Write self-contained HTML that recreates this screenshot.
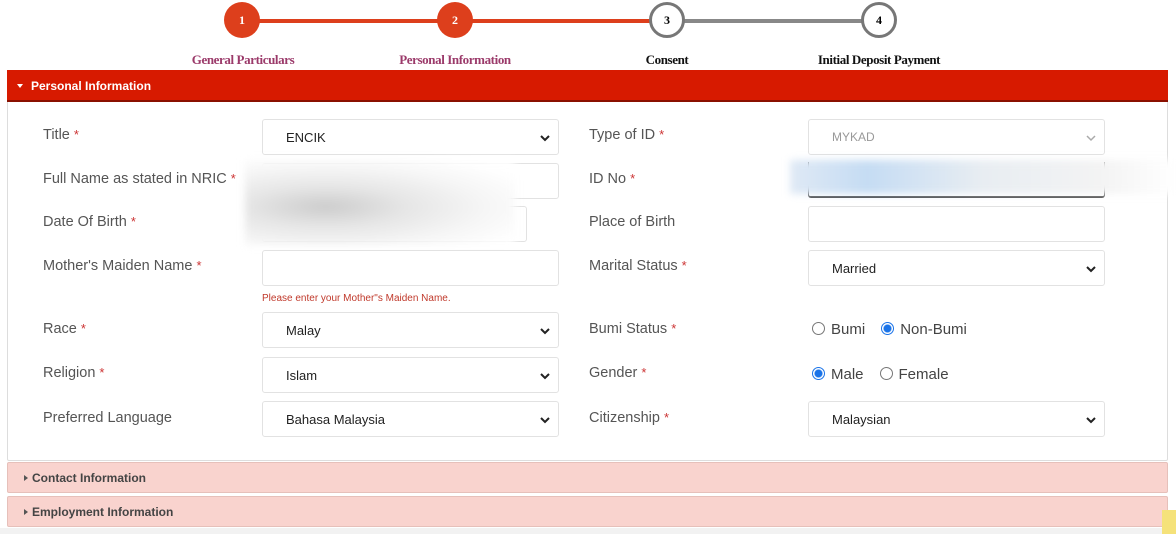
<!DOCTYPE html>
<html><head><meta charset="utf-8"><style>
*{box-sizing:border-box;margin:0;padding:0}
body{width:1176px;height:534px;background:#fff;position:relative;overflow:hidden;font-family:"Liberation Sans",sans-serif;}
.a{position:absolute}
.c{position:absolute;width:36px;height:36px;border-radius:50%;top:2px;font:bold 12px "Liberation Serif",serif;display:flex;align-items:center;justify-content:center}
.red{background:#dd3f1c;color:#fff}
.wh{background:#fff;border:3px solid #777;color:#000}
.sl{position:absolute;top:52px;font:bold 13px "Liberation Serif",serif;letter-spacing:-0.4px;white-space:nowrap;transform:translateX(-50%)}
.lb{position:absolute;font-size:14.5px;color:#555}
.lb span{color:#c33;font-size:13px}
.in{position:absolute;height:36px;border:1px solid #e2e2e2;border-radius:3px;background:#fff;font-size:13px;color:#222;padding:0 0 0 23px;display:flex;align-items:center}
.in svg{position:absolute;right:8px;top:14px}
.bar{position:absolute;left:7px;width:1161px;height:31px;background:#f9d3ce;border:1px solid #e6c0ba;border-radius:2px;font:bold 12px "Liberation Sans",sans-serif;color:#444;padding:8px 0 0 24px}
.bar:before{content:"";position:absolute;left:16px;top:12px;border-left:4px solid #555;border-top:3px solid transparent;border-bottom:3px solid transparent}
.rd{display:inline-block;width:13px;height:13px;border-radius:50%;border:1px solid #777;vertical-align:-1px;margin-right:6px}
.rd.on{border:1px solid #1a73e8;background:radial-gradient(#1a73e8 3.5px,#fff 4.5px)}
.rg{position:absolute;font-size:15px;color:#444}
</style></head><body>
<div class="a" style="left:242px;top:19px;width:425px;height:4px;background:#dd3f1c"></div>
<div class="a" style="left:667px;top:19px;width:212px;height:4px;background:#888"></div>
<div class="c red" style="left:224px">1</div>
<div class="c red" style="left:437px">2</div>
<div class="c wh" style="left:649px">3</div>
<div class="c wh" style="left:861px">4</div>
<div class="sl" style="left:243px;color:#9b3a6a">General Particulars</div>
<div class="sl" style="left:455px;color:#9b3a6a">Personal Information</div>
<div class="sl" style="left:667px;color:#111">Consent</div>
<div class="sl" style="left:879px;color:#111">Initial Deposit Payment</div>

<div class="a" style="left:7px;top:70px;width:1161px;height:391px;border:1px solid #ddd;border-radius:2px"></div>
<div class="a" style="left:7px;top:70px;width:1161px;height:32px;background:#d71a00;border-bottom:2px solid #8a1000;color:#fff;font:bold 12px 'Liberation Sans',sans-serif;padding:9px 0 0 24px">Personal Information</div>
<div class="a" style="left:17px;top:84px;border-top:4px solid #fff;border-left:3px solid transparent;border-right:3px solid transparent"></div>

<div class="lb" style="left:43px;top:127px">Title <span>*</span></div>
<div class="lb" style="left:43px;top:171px">Full Name as stated in NRIC <span>*</span></div>
<div class="lb" style="left:43px;top:214px">Date Of Birth <span>*</span></div>
<div class="lb" style="left:43px;top:258px">Mother's Maiden Name <span>*</span></div>
<div class="lb" style="left:43px;top:321px">Race <span>*</span></div>
<div class="lb" style="left:43px;top:365px">Religion <span>*</span></div>
<div class="lb" style="left:43px;top:410px">Preferred Language</div>

<div class="lb" style="left:589px;top:127px">Type of ID <span>*</span></div>
<div class="lb" style="left:589px;top:171px">ID No <span>*</span></div>
<div class="lb" style="left:589px;top:214px">Place of Birth</div>
<div class="lb" style="left:589px;top:258px">Marital Status <span>*</span></div>
<div class="lb" style="left:589px;top:321px">Bumi Status <span>*</span></div>
<div class="lb" style="left:589px;top:365px">Gender <span>*</span></div>
<div class="lb" style="left:589px;top:410px">Citizenship <span>*</span></div>

<div class="in" style="left:262px;top:119px;width:297px">ENCIK<svg width="10" height="8"><path d="M1 2l4 4 4-4" stroke="#222" stroke-width="2" fill="none"/></svg></div>
<div class="in" style="left:262px;top:163px;width:297px"></div>
<div class="in" style="left:262px;top:206px;width:265px"></div>
<div class="a" style="left:245px;top:160px;width:270px;height:85px;background:radial-gradient(ellipse at 30% 55%,#ccc 0,#e6e6e6 30%,#f6f6f6 60%,#fff 85%);filter:blur(4px)"></div>
<div class="in" style="left:262px;top:250px;width:297px"></div>
<div class="a" style="left:262px;top:293px;font-size:10px;color:#c0392b">Please enter your Mother"s Maiden Name.</div>
<div class="in" style="left:262px;top:312px;width:297px">Malay<svg width="10" height="8"><path d="M1 2l4 4 4-4" stroke="#222" stroke-width="2" fill="none"/></svg></div>
<div class="in" style="left:262px;top:357px;width:297px">Islam<svg width="10" height="8"><path d="M1 2l4 4 4-4" stroke="#222" stroke-width="2" fill="none"/></svg></div>
<div class="in" style="left:262px;top:401px;width:297px">Bahasa Malaysia<svg width="10" height="8"><path d="M1 2l4 4 4-4" stroke="#222" stroke-width="2" fill="none"/></svg></div>

<div class="in" style="left:808px;top:119px;width:297px;color:#999;font-size:12px">MYKAD<svg width="10" height="8"><path d="M1 2l4 4 4-4" stroke="#aaa" stroke-width="1.5" fill="none"/></svg></div>
<div class="in" style="left:808px;top:162px;width:297px;border:1px solid #444;border-width:0 1px 2px 1px;border-radius:0 0 3px 3px"></div>
<div class="a" style="left:790px;top:160px;width:386px;height:34px;background:linear-gradient(90deg,#dfe9f5 0,#c5dcf3 20%,#e8edf2 50%,#f3f3f3 80%,#fff 100%);filter:blur(4px)"></div>
<div class="in" style="left:808px;top:206px;width:297px"></div>
<div class="in" style="left:808px;top:250px;width:297px">Married<svg width="10" height="8"><path d="M1 2l4 4 4-4" stroke="#222" stroke-width="2" fill="none"/></svg></div>
<div class="rg" style="left:812px;top:321px"><span class="rd"></span>Bumi<span style="display:inline-block;width:16px"></span><span class="rd on"></span>Non-Bumi</div>
<div class="rg" style="left:812px;top:366px"><span class="rd on"></span>Male<span style="display:inline-block;width:16px"></span><span class="rd"></span>Female</div>
<div class="in" style="left:808px;top:401px;width:297px">Malaysian<svg width="10" height="8"><path d="M1 2l4 4 4-4" stroke="#222" stroke-width="2" fill="none"/></svg></div>

<div class="bar" style="top:462px">Contact Information</div>
<div class="bar" style="top:496px">Employment Information</div>
<div class="a" style="left:0;top:528px;width:1176px;height:6px;background:#f2f2f2"></div>
<div class="a" style="left:1162px;top:510px;width:14px;height:24px;background:#f5e27a"></div>
</body></html>
